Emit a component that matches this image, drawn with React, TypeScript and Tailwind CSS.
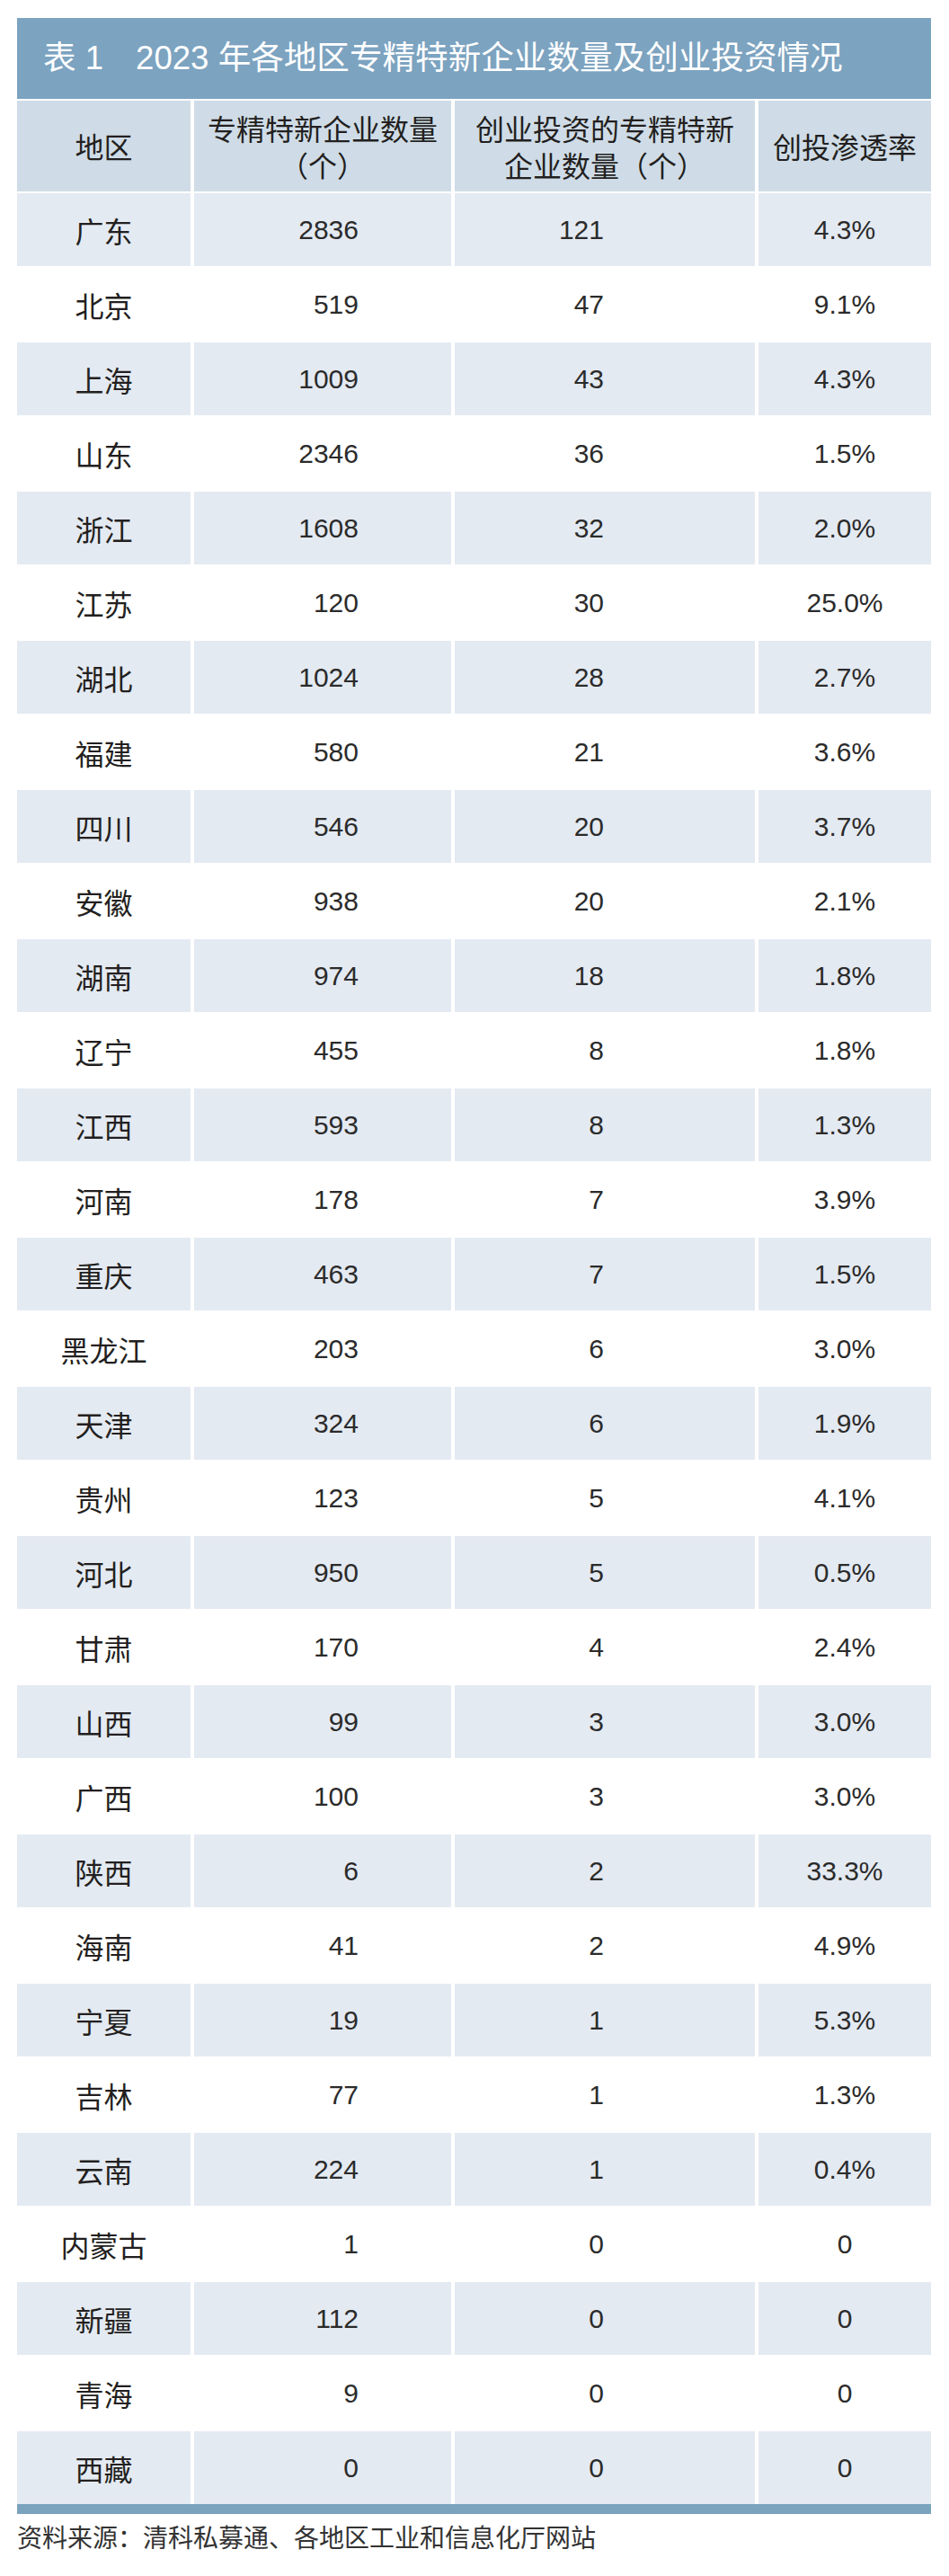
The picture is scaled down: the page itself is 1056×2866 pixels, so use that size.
import React from 'react'

type Row = [string, string, string, string]

const rows: Row[] = [
  ['广东', '2836', '121', '4.3%'],
  ['北京', '519', '47', '9.1%'],
  ['上海', '1009', '43', '4.3%'],
  ['山东', '2346', '36', '1.5%'],
  ['浙江', '1608', '32', '2.0%'],
  ['江苏', '120', '30', '25.0%'],
  ['湖北', '1024', '28', '2.7%'],
  ['福建', '580', '21', '3.6%'],
  ['四川', '546', '20', '3.7%'],
  ['安徽', '938', '20', '2.1%'],
  ['湖南', '974', '18', '1.8%'],
  ['辽宁', '455', '8', '1.8%'],
  ['江西', '593', '8', '1.3%'],
  ['河南', '178', '7', '3.9%'],
  ['重庆', '463', '7', '1.5%'],
  ['黑龙江', '203', '6', '3.0%'],
  ['天津', '324', '6', '1.9%'],
  ['贵州', '123', '5', '4.1%'],
  ['河北', '950', '5', '0.5%'],
  ['甘肃', '170', '4', '2.4%'],
  ['山西', '99', '3', '3.0%'],
  ['广西', '100', '3', '3.0%'],
  ['陕西', '6', '2', '33.3%'],
  ['海南', '41', '2', '4.9%'],
  ['宁夏', '19', '1', '5.3%'],
  ['吉林', '77', '1', '1.3%'],
  ['云南', '224', '1', '0.4%'],
  ['内蒙古', '1', '0', '0'],
  ['新疆', '112', '0', '0'],
  ['青海', '9', '0', '0'],
  ['西藏', '0', '0', '0'],
]

const cjk = "font-['Noto_Sans_CJK_SC',sans-serif]"
const num = "font-['Liberation_Sans','Noto_Sans_CJK_SC',sans-serif]"
const cols = 'grid grid-cols-[193px_286px_334px_192px] gap-x-[4px]'

export default function App() {
  return (
    <div className="w-[1056px] h-[2866px] bg-white pt-[20px] pl-[19px] pr-[20px] text-[#231f20]">
      {/* Title bar */}
      <div className={`h-[90px] bg-[#7ca3c0] flex items-center pl-[29px] text-white text-[36.6px] leading-none ${num}`}>
        <span>表 1</span>
        <span className="ml-[36px]">2023 年各地区专精特新企业数量及创业投资情况</span>
      </div>

      {/* Header */}
      <div className={`${cols} mt-[2px] h-[101px] ${cjk} text-[32px] leading-[41px]`}>
        <div className="bg-[#cfdce7] flex items-center justify-center">地区</div>
        <div className="bg-[#cfdce7] flex flex-col items-center justify-center">
          <span>专精特新企业数量</span>
          <span>（个）</span>
        </div>
        <div className="bg-[#cfdce7] flex flex-col items-center justify-center">
          <span>创业投资的专精特新</span>
          <span>企业数量（个）</span>
        </div>
        <div className="bg-[#cfdce7] flex items-center justify-center">创投渗透率</div>
      </div>

      {/* Data rows */}
      <div className="mt-[2px] flex flex-col gap-y-[2px]">
        {rows.map((r, i) => {
          const bg = i % 2 === 0 ? 'bg-[#e4eaf2]' : 'bg-white'
          return (
            <div key={r[0]} className={`${cols} h-[81px]`}>
              <div className={`${bg} flex items-center justify-center text-[32px] ${cjk}`}>{r[0]}</div>
              <div className={`${bg} flex items-center justify-end pr-[103px] text-[30px] text-[#2b2b2b] ${num}`}>{r[1]}</div>
              <div className={`${bg} flex items-center justify-end pr-[168px] text-[30px] text-[#2b2b2b] ${num}`}>{r[2]}</div>
              <div className={`${bg} flex items-center justify-center text-[30px] text-[#2b2b2b] ${num}`}>{r[3]}</div>
            </div>
          )
        })}
      </div>

      {/* Bottom rule */}
      <div className="h-[11px] bg-[#7ba3bd]" />

      {/* Source */}
      <div className={`mt-[8px] text-[28px] leading-[34px] text-[#333] ${cjk}`}>
        资料来源：清科私募通、各地区工业和信息化厅网站
      </div>
    </div>
  )
}
